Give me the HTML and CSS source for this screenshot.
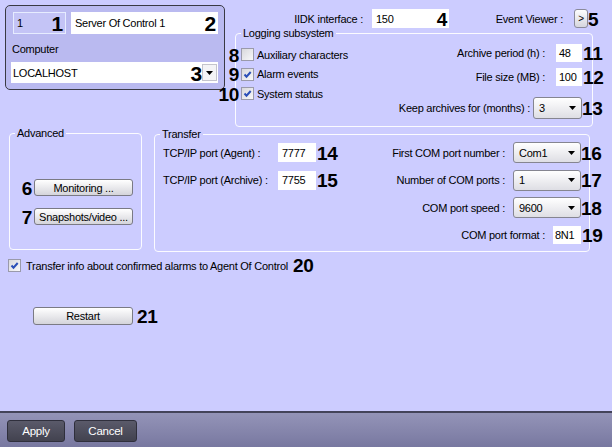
FILE: index.html
```html
<!DOCTYPE html>
<html>
<head>
<meta charset="utf-8">
<title>Server Of Control</title>
<link rel="stylesheet" href="styles.css">
</head>
<body>
<div class="app">
  <div class="main">
    <div class="top">
      <div class="card">
        <div class="card-row">
          <span class="field field-id">1<b class="num num-big num-in">1</b></span>
          <span class="field field-name">Server Of Control 1<b class="num num-big num-in">2</b></span>
        </div>
        <div class="card-label">Computer</div>
        <div class="combo">
          <span>LOCALHOST</span>
          <b class="num num-big num-combo">3</b>
          <span class="combo-btn"><svg width="7" height="4" viewBox="0 0 7 4"><polygon points="0,0 7,0 3.5,4" fill="#000"/></svg></span>
        </div>
      </div>
      <div class="right">
        <div class="iidk-row">
          <span class="lbl lbl-iidk">IIDK interface :</span>
          <span class="field field-iidk">150<b class="num num-in">4</b></span>
          <span class="lbl lbl-ev">Event Viewer :</span>
          <span class="mini-btn">&gt;<b class="num num-after">5</b></span>
        </div>
        <div class="group group-log">
          <span class="legend">Logging subsystem</span>
          <div class="checks">
            <div class="check"><span class="box"><b class="num num-before">8</b></span>Auxiliary characters</div>
            <div class="check"><span class="box"><svg width="11" height="11" viewBox="0 0 11 11"><path d="M2.5 5.5 L4.5 7.7 L8.7 3" fill="none" stroke="#2b4fb8" stroke-width="2"/></svg><b class="num num-before">9</b></span>Alarm events</div>
            <div class="check"><span class="box"><svg width="11" height="11" viewBox="0 0 11 11"><path d="M2.5 5.5 L4.5 7.7 L8.7 3" fill="none" stroke="#2b4fb8" stroke-width="2"/></svg><b class="num num-before">10</b></span>System status</div>
          </div>
          <div class="log-fields">
            <div class="frow"><span class="lbl">Archive period (h) :</span><span class="field field-sm">48<b class="num num-after">11</b></span></div>
            <div class="frow frow-2"><span class="lbl">File size (MB) :</span><span class="field field-sm">100<b class="num num-after">12</b></span></div>
            <div class="frow frow-3"><span class="lbl">Keep archives for (months) :</span><span class="select select-sm">3<svg class="arrow" width="7" height="4" viewBox="0 0 7 4"><polygon points="0,0 7,0 3.5,4" fill="#000"/></svg><b class="num num-after">13</b></span></div>
          </div>
        </div>
      </div>
    </div>

    <div class="mid">
      <div class="group group-adv">
        <span class="legend">Advanced</span>
        <span class="btn btn-adv">Monitoring ...<b class="num num-before">6</b></span>
        <span class="btn btn-adv btn-adv-2">Snapshots/video ...<b class="num num-before">7</b></span>
      </div>
      <div class="group group-tr">
        <span class="legend">Transfer</span>
        <div class="tr-col tr-left">
          <div class="trow"><span class="lbl lbl-port">TCP/IP port (Agent) :</span><span class="field field-port">7777<b class="num num-after">14</b></span></div>
          <div class="trow"><span class="lbl lbl-port">TCP/IP port (Archive) :</span><span class="field field-port">7755<b class="num num-after">15</b></span></div>
        </div>
        <div class="tr-col tr-right">
          <div class="trow"><span class="lbl">First COM port number :</span><span class="select select-com">Com1<svg class="arrow" width="7" height="4" viewBox="0 0 7 4"><polygon points="0,0 7,0 3.5,4" fill="#000"/></svg><b class="num num-after">16</b></span></div>
          <div class="trow"><span class="lbl">Number of COM ports :</span><span class="select select-com">1<svg class="arrow" width="7" height="4" viewBox="0 0 7 4"><polygon points="0,0 7,0 3.5,4" fill="#000"/></svg><b class="num num-after">17</b></span></div>
          <div class="trow"><span class="lbl">COM port speed :</span><span class="select select-com">9600<svg class="arrow" width="7" height="4" viewBox="0 0 7 4"><polygon points="0,0 7,0 3.5,4" fill="#000"/></svg><b class="num num-after">18</b></span></div>
          <div class="trow"><span class="lbl">COM port format :</span><span class="field field-fmt">8N1<b class="num num-after">19</b></span></div>
        </div>
      </div>
    </div>

    <div class="check check-transfer"><span class="box"><svg width="11" height="11" viewBox="0 0 11 11"><path d="M2.5 5.5 L4.5 7.7 L8.7 3" fill="none" stroke="#2b4fb8" stroke-width="2"/></svg></span>Transfer info about confirmed alarms to Agent Of Control<b class="num num-inline">20</b></div>

    <span class="btn btn-restart">Restart<b class="num num-after num-after-4">21</b></span>
  </div>

  <div class="footer">
    <span class="fbtn fbtn-apply">Apply</span>
    <span class="fbtn fbtn-cancel">Cancel</span>
  </div>
</div>
</body>
</html>
```

FILE: styles.css
```css
* { box-sizing: border-box; }
html, body { margin: 0; padding: 0; }
body {
  width: 612px;
  height: 447px;
  overflow: hidden;
  background: #ccccff;
  font-family: "Liberation Sans", Arial, sans-serif;
  font-size: 11px;
  letter-spacing: -0.25px;
  color: #000;
}
.app { display: flex; flex-direction: column; height: 447px; }
.main { height: 411px; padding: 5px 0 0 5px; }

/* annotation numbers */
.num {
  position: absolute;
  top: 50%;
  transform: translateY(-50%);
  font-weight: bold;
  font-size: 19px;
  line-height: 1;
  letter-spacing: -0.3px;
  color: #000;
  white-space: nowrap;
}
.num-big { font-size: 21px; }
.num-in { right: 2px; }
.num-after { left: calc(100% + 1px); }
.num-after-4 { left: calc(100% + 5px); }
.num-before { right: calc(100% + 3px); }
.num-combo { right: 16px; }
.num-inline { position: static; transform: none; margin-left: 5px; }

/* generic */
.lbl { white-space: nowrap; }
.field {
  position: relative;
  display: flex;
  align-items: center;
  background: #fff;
  padding-left: 4px;
  height: 19px;
  white-space: nowrap;
}

/* top-left card */
.top { display: flex; align-items: flex-start; }
.card {
  width: 220px;
  height: 85px;
  border: 1px solid #3a3a44;
  border-radius: 5px;
  background: #babaf0;
  padding: 6px 0 0 5px;
}
.card-row { display: flex; gap: 5px; margin-left: 2px; }
.field-id {
  width: 53px;
  height: 22px;
  background: #c4c4f6;
  border: 1px solid #e6ecff;
  padding-left: 3px;
}
.field-name { width: 147px; height: 22px; }
.card-label { margin: 9px 0 0 1px; height: 13px; line-height: 13px; }
.combo {
  position: relative;
  margin-top: 6px;
  width: 207px;
  height: 21px;
  background: #fff;
  display: flex;
  align-items: center;
  padding-left: 2px;
}
.combo-btn {
  position: absolute;
  right: 1px;
  top: 2px;
  width: 15px;
  height: 17px;
  background: #f4f4f6;
  border: 1px solid #c4c4cc;
  display: flex;
  align-items: center;
  justify-content: center;
}

/* top-right */
.right { margin-left: 10px; width: 358px; }
.iidk-row { display: flex; align-items: center; height: 19px; margin-top: 4px; }
.lbl-iidk { width: 128px; text-align: right; }
.field-iidk { width: 77px; margin-left: 9px; }
.lbl-ev { flex: 1; text-align: right; }
.mini-btn {
  position: relative;
  margin: 0 5px 0 11px;
  width: 14px;
  height: 19px;
  border: 1px solid #8a8a9a;
  border-radius: 3px;
  background: linear-gradient(#fdfdfd, #d6d6de);
  display: flex;
  align-items: center;
  justify-content: center;
  font-size: 10px;
}

/* group boxes */
.group {
  position: relative;
  border: 1px solid #fbfbff;
  border-radius: 4px;
}
.legend {
  position: absolute;
  top: -7px;
  left: 5px;
  padding: 0 2px;
  line-height: 13px;
  background: #ccccff;
}
.group-log {
  margin-top: 5px;
  height: 94px;
  display: flex;
  justify-content: space-between;
}
.checks { padding: 14px 0 0 5px; display: flex; flex-direction: column; gap: 6.5px; }
.check { display: flex; align-items: center; height: 13px; white-space: nowrap; }
.box {
  position: relative;
  width: 13px;
  height: 13px;
  margin-right: 3px;
  border: 1px solid #9a9aaa;
  background: linear-gradient(135deg, #d8d8dc, #f8f8fa);
  display: flex;
  align-items: center;
  justify-content: center;
}
.log-fields { padding: 10px 10px 0 0; }
.frow { display: flex; justify-content: flex-end; align-items: center; }
.frow-2 { margin-top: 6px; }
.frow-3 { margin-top: 11px; }
.field-sm { width: 26px; height: 18px; margin-left: 11px; padding-left: 3px; }

/* selects */
.select {
  position: relative;
  display: flex;
  align-items: center;
  padding-left: 5px;
  border: 1px solid #858590;
  border-radius: 3px;
  background: linear-gradient(#ffffff, #dedee4);
}
.select .arrow { position: absolute; right: 5px; top: 50%; margin-top: -2px; }
.select-sm { width: 49px; height: 22px; margin-left: 3px; }
.select-com { width: 68px; height: 21px; margin-left: 8px; }

/* middle row */
.mid { display: flex; align-items: flex-start; margin-top: 6px; }
.group-adv {
  margin-left: 4px;
  width: 133px;
  height: 117px;
  padding: 45px 0 0 24px;
  display: flex;
  flex-direction: column;
  align-items: flex-start;
}
.btn {
  position: relative;
  display: flex;
  align-items: center;
  justify-content: center;
  border: 1px solid #7a7a84;
  border-radius: 3px;
  background: linear-gradient(#ffffff, #d4d4da);
  white-space: nowrap;
}
.btn-adv { width: 99px; height: 17px; }
.btn-adv-2 { margin-top: 12px; }
.group-tr {
  margin: 1px 0 0 12px;
  width: 436px;
  height: 118px;
  padding: 4px 8px 0 8px;
  display: flex;
  justify-content: space-between;
}
.trow { display: flex; align-items: center; height: 27.5px; }
.tr-right .trow { justify-content: flex-end; }
.lbl-port { width: 115px; }
.field-port { width: 38px; height: 19px; }
.field-fmt { width: 28px; height: 18px; margin-left: 8px; padding-left: 2px; }

/* bottom */
.check-transfer { margin: 7px 0 0 3px; }
.check-transfer .box { margin-right: 5px; }
.btn-restart { margin: 35px 0 0 28px; width: 100px; height: 18px; }

/* footer */
.footer {
  height: 36px;
  border-top: 2px solid #44445a;
  background: linear-gradient(#9494b8, #7878a0);
  padding: 7px 0 0 7px;
  display: flex;
  gap: 9px;
  align-items: flex-start;
}
.fbtn {
  height: 22px;
  display: flex;
  align-items: center;
  justify-content: center;
  color: #fff;
  font-size: 11.5px;
  border: 1px solid #2f2f3c;
  border-radius: 3px;
  background: linear-gradient(#5a5a6a, #42424f);
}
.fbtn-apply { width: 58px; }
.fbtn-cancel { width: 63px; }
```
